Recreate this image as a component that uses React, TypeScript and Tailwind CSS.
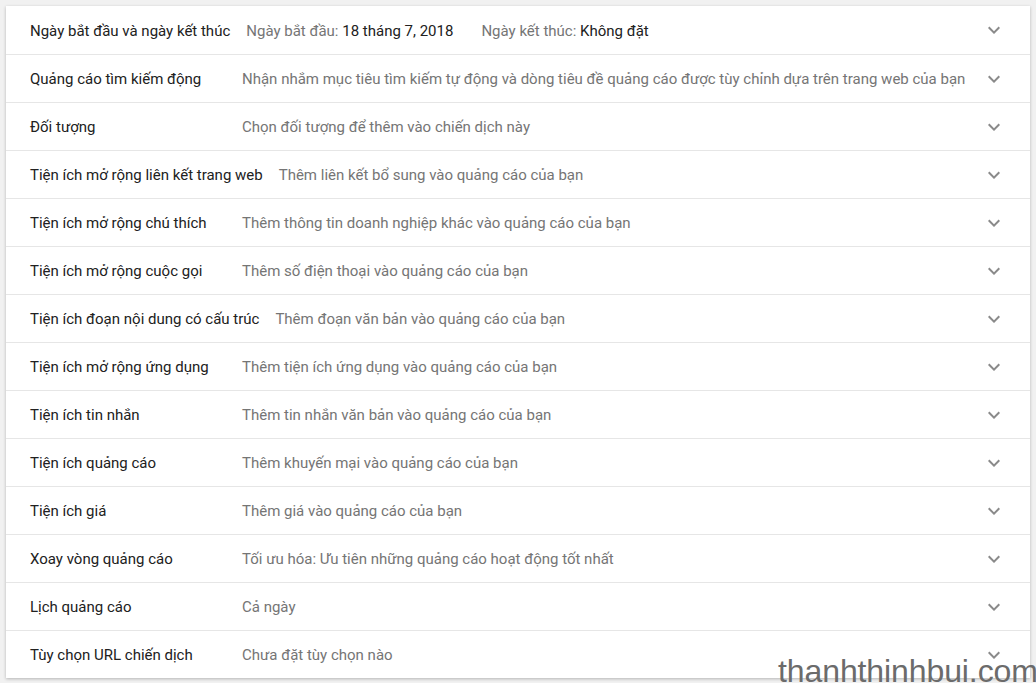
import React from "react";

type Row = { label: string; desc: React.ReactNode };

const Chevron = () => (
  <svg width="24" height="24" viewBox="0 0 24 24" className="shrink-0 fill-[#8a8a8a]">
    <path d="M16.59 8.59L12 13.17 7.41 8.59 6 10l6 6 6-6z" />
  </svg>
);

const rows: Row[] = [
  {
    label: "Ngày bắt đầu và ngày kết thúc",
    desc: (
      <span className="flex gap-[28px]">
        <span>
          Ngày bắt đầu: <span className="text-[#212121]">18 tháng 7, 2018</span>
        </span>
        <span>
          Ngày kết thúc: <span className="text-[#212121]">Không đặt</span>
        </span>
      </span>
    ),
  },
  {
    label: "Quảng cáo tìm kiếm động",
    desc: "Nhận nhắm mục tiêu tìm kiếm tự động và dòng tiêu đề quảng cáo được tùy chỉnh dựa trên trang web của bạn",
  },
  { label: "Đối tượng", desc: "Chọn đối tượng để thêm vào chiến dịch này" },
  { label: "Tiện ích mở rộng liên kết trang web", desc: "Thêm liên kết bổ sung vào quảng cáo của bạn" },
  { label: "Tiện ích mở rộng chú thích", desc: "Thêm thông tin doanh nghiệp khác vào quảng cáo của bạn" },
  { label: "Tiện ích mở rộng cuộc gọi", desc: "Thêm số điện thoại vào quảng cáo của bạn" },
  { label: "Tiện ích đoạn nội dung có cấu trúc", desc: "Thêm đoạn văn bản vào quảng cáo của bạn" },
  { label: "Tiện ích mở rộng ứng dụng", desc: "Thêm tiện ích ứng dụng vào quảng cáo của bạn" },
  { label: "Tiện ích tin nhắn", desc: "Thêm tin nhắn văn bản vào quảng cáo của bạn" },
  { label: "Tiện ích quảng cáo", desc: "Thêm khuyến mại vào quảng cáo của bạn" },
  { label: "Tiện ích giá", desc: "Thêm giá vào quảng cáo của bạn" },
  { label: "Xoay vòng quảng cáo", desc: "Tối ưu hóa: Ưu tiên những quảng cáo hoạt động tốt nhất" },
  { label: "Lịch quảng cáo", desc: "Cả ngày" },
  { label: "Tùy chọn URL chiến dịch", desc: "Chưa đặt tùy chọn nào" },
];

export default function App() {
  return (
    <div className="relative h-[683px] w-[1036px] overflow-hidden bg-[#f1f1f1] pt-[6px] pl-[6px] font-['Roboto',sans-serif] text-[15px]">
      <div className="w-[1024px] bg-white shadow-[0_1px_3px_rgba(0,0,0,0.25)]">
        {rows.map((r, i) => (
          <div
            key={i}
            className={`flex h-[48px] items-center pl-[24px] pr-[24px] ${i > 0 ? "border-t border-[#e6e6e6]" : ""}`}
          >
            <div className="mr-[16px] min-w-[196px] shrink-0 whitespace-nowrap pt-[2px] text-[#212121]">{r.label}</div>
            <div className="flex-1 whitespace-nowrap pt-[2px] text-[#757575]">{r.desc}</div>
            <Chevron />
          </div>
        ))}
      </div>
      <div className="absolute left-[778px] top-[655px] font-['Liberation_Sans',sans-serif] text-[32px] leading-[32px] tracking-[-0.1px] text-[#6b6b6b]">
        thanhthinhbui.com
      </div>
    </div>
  );
}
